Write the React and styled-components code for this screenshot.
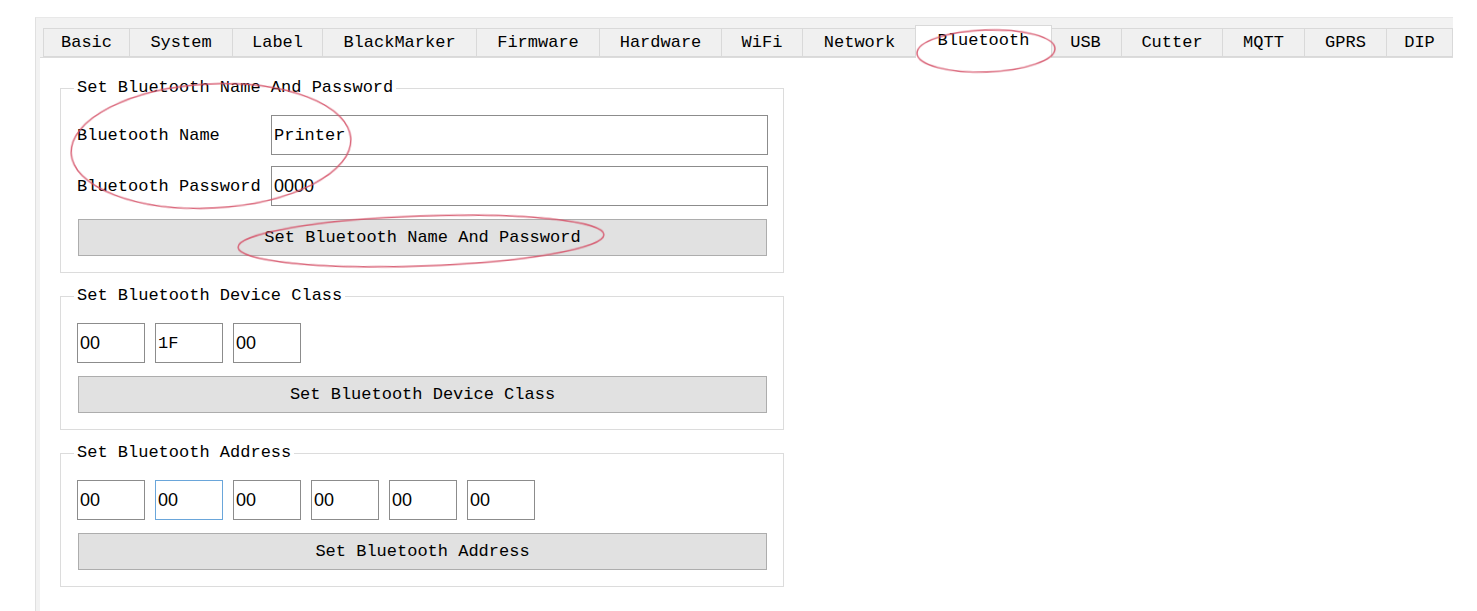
import React from "react";
import styled, { createGlobalStyle } from "styled-components";

const GlobalStyle = createGlobalStyle`
  html, body {
    margin: 0;
    padding: 0;
    background: #ffffff;
  }
  body {
    font-family: "Liberation Mono", "DejaVu Sans Mono", monospace;
    font-size: 17px;
    color: #000;
  }
`

const Screen = styled.div`
  position: relative;
  width: 1477px;
  height: 611px;
  overflow: hidden;
  background: #fff;
`
const Frame = styled.div`
  margin: 17px 0 0 35px;
  width: 1418px;
  height: 594px;
  box-sizing: border-box;
  background: #f2f2f2;
  border-left: 1px solid #e0e0e0;
  border-top: 1px solid #e8e8e8;
  padding: 10px 0 0 4px;
  display: flex;
  flex-direction: column;
`
const TabBar = styled.div`
  display: flex;
  align-items: flex-end;
  height: 29px;
  padding-left: 3px;
  position: relative;
  z-index: 2;
`
const Tab = styled.div`
  box-sizing: border-box;
  width: ${p => p.$active ? p.$w + 4 : p.$w}px;
  height: ${p => p.$active ? 33 : 29}px;
  margin: ${p => p.$active ? '0 -2px -1px -2px' : '0'};
  display: flex;
  align-items: center;
  justify-content: center;
  padding-bottom: ${p => p.$active ? 4 : 0}px;
  background: ${p => p.$active ? '#ffffff' : '#f0f0f0'};
  border: 1px solid #d9d9d9;
  border-left: ${p => p.$first || p.$active ? '1px solid #d9d9d9' : 'none'};
  border-bottom: ${p => p.$active ? 'none' : '1px solid #d9d9d9'};
  position: relative;
  z-index: ${p => p.$active ? 2 : 1};
  white-space: nowrap;
  color: #000;
`
const Page = styled.div`
  flex: 1;
  background: #fff;
  border-top: 1px solid #dcdcdc;
  padding: 20px 0 0 20px;
  display: flex;
  flex-direction: column;
  gap: 13px;
`
const GroupBox = styled.fieldset`
  width: 724px;
  box-sizing: border-box;
  margin: 0;
  border: 1px solid #dcdcdc;
  padding: 17px 15px 16px 16px;
  display: flex;
  flex-direction: column;
  min-width: 0;
`
const Legend = styled.legend`
  padding: 0 3px;
  margin-left: -3px;
  line-height: 20px;
  color: #000;
`
const FormGrid = styled.div`
  display: grid;
  grid-template-columns: 194px 1fr;
  row-gap: 11px;
  align-items: center;
`
const Label = styled.div`
  white-space: nowrap;
`
const TextBox = styled.div`
  box-sizing: border-box;
  height: 40px;
  width: ${p => p.$w ? `${p.$w}px` : 'auto'};
  border: 1px solid ${p => p.$focus ? '#6aa6da' : '#8c8c8c'};
  background: #fff;
  display: flex;
  align-items: center;
  padding-left: 2px;
  font-family: ${p => p.$mono ? '"Liberation Mono", monospace' : '"Liberation Sans", Arial, sans-serif'};
  font-size: ${p => p.$mono ? 17 : 18}px;
  color: #000;
`
const BoxRow = styled.div`
  display: flex;
  gap: 10px;
`
const ActionButton = styled.div`
  box-sizing: border-box;
  height: 37px;
  margin: 13px 1px 0 1px;
  background: #e1e1e1;
  border: 1px solid #adadad;
  display: flex;
  align-items: center;
  justify-content: center;
  color: #000;
`
const Marks = styled.svg`
  position: absolute;
  left: 0;
  top: 0;
  pointer-events: none;
  z-index: 5;
`

const tabs = [
  ['Basic', 87], ['System', 103], ['Label', 90], ['BlackMarker', 154], ['Firmware', 123],
  ['Hardware', 122], ['WiFi', 81], ['Network', 114], ['Bluetooth', 133], ['USB', 72],
  ['Cutter', 101], ['MQTT', 82], ['GPRS', 82], ['DIP', 66],
]

const HexBoxes = ({values, focusIndex}) => (
  <BoxRow>
    {values.map((v, i) => (
      <TextBox key={i} $w={68} $mono={v === '1F'} $focus={i === focusIndex}>{v}</TextBox>
    ))}
  </BoxRow>
)

const App = () => {
  return (
    <Screen>
      <GlobalStyle />
      <Frame>
        <TabBar>
          {tabs.map(([name, w], i) => (
            <Tab key={name} $w={w} $first={i === 0} $active={name === 'Bluetooth'}>{name}</Tab>
          ))}
        </TabBar>
        <Page>
          <GroupBox>
            <Legend>Set Bluetooth Name And Password</Legend>
            <FormGrid>
              <Label>Bluetooth Name</Label>
              <TextBox $mono>Printer</TextBox>
              <Label>Bluetooth Password</Label>
              <TextBox>0000</TextBox>
            </FormGrid>
            <ActionButton>Set Bluetooth Name And Password</ActionButton>
          </GroupBox>
          <GroupBox>
            <Legend>Set Bluetooth Device Class</Legend>
            <HexBoxes values={['00', '1F', '00']} />
            <ActionButton>Set Bluetooth Device Class</ActionButton>
          </GroupBox>
          <GroupBox>
            <Legend>Set Bluetooth Address</Legend>
            <HexBoxes values={['00', '00', '00', '00', '00', '00']} focusIndex={1} />
            <ActionButton>Set Bluetooth Address</ActionButton>
          </GroupBox>
        </Page>
      </Frame>
      <Marks width="1477" height="611" viewBox="0 0 1477 611">
        <g fill="none" stroke="#d6566c" strokeWidth="1.5" opacity="0.9">
          <ellipse cx="986" cy="51" rx="69" ry="21" transform="rotate(-2 986 51)" />
          <ellipse cx="211" cy="146" rx="140" ry="62" transform="rotate(-3 211 146)" />
          <ellipse cx="421" cy="241" rx="183" ry="25" transform="rotate(-2 421 241)" />
        </g>
      </Marks>
    </Screen>
  )
}

export default App
